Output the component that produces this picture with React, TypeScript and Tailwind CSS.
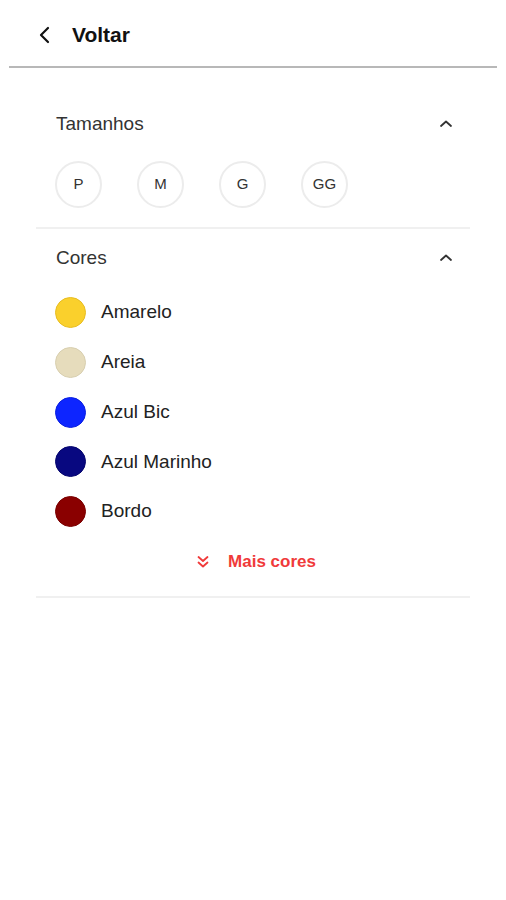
import React from "react";

const sizes = ["P", "M", "G", "GG"];
const colors = [
  { name: "Amarelo", bg: "bg-[#fad02c]", border: "border-[#e8bd22]" },
  { name: "Areia", bg: "bg-[#e6dcbc]", border: "border-[#d8cfb0]" },
  { name: "Azul Bic", bg: "bg-[#0d25ff]", border: "border-[#0a1fe0]" },
  { name: "Azul Marinho", bg: "bg-[#080880]", border: "border-[#06066e]" },
  { name: "Bordo", bg: "bg-[#8a0000]", border: "border-[#7a0000]" },
];

function ChevronUp() {
  return (
    <svg width="14" height="10" viewBox="0 0 14 10" fill="none">
      <path d="M2 7 L7 2.5 L12 7" stroke="#333" strokeWidth="1.8" strokeLinecap="round" strokeLinejoin="round" />
    </svg>
  );
}

export default function App() {
  return (
    <div className="w-[506px] h-[900px] bg-white" style={{ fontFamily: '"Liberation Sans", Arial, sans-serif' }}>
      <div className="mx-[9px] h-[68px] border-b-[2px] border-[#b8b8b8] flex items-center">
        <div className="pl-[29px] pt-[3px] flex items-center">
          <svg width="14" height="18" viewBox="0 0 14 18" fill="none">
            <path d="M10 2 L3 9 L10 16" stroke="#111" strokeWidth="2.2" strokeLinecap="round" strokeLinejoin="round" />
          </svg>
          <span className="ml-[20px] text-[21px] font-bold text-[#111] leading-none">Voltar</span>
        </div>
      </div>

      <div className="mx-[36px] mt-[41px]">
        <div className="border-b-[2px] border-[#f0f0f0] pb-[19px]">
          <div className="flex items-center justify-between pl-[20px] pr-[17px] h-[30px]">
            <span className="text-[19px] text-[#333]">Tamanhos</span>
            <ChevronUp />
          </div>
          <div className="flex gap-[35px] pl-[19px] mt-[22px]">
            {sizes.map((s) => (
              <div key={s} className="w-[47px] h-[47px] rounded-full border-[2px] border-[#ececec] flex items-center justify-center text-[15px] text-[#333]">
                {s}
              </div>
            ))}
          </div>
        </div>

        <div className="border-b-[2px] border-[#f0f0f0] pb-[21px]">
          <div className="flex items-center justify-between pl-[20px] pr-[17px] h-[30px] mt-[14px]">
            <span className="text-[19px] text-[#333]">Cores</span>
            <ChevronUp />
          </div>
          <div className="flex flex-col gap-[18.75px] pl-[19px] mt-[24px]">
            {colors.map((c) => (
              <div key={c.name} className="flex items-center">
                <div className={`w-[31px] h-[31px] rounded-full border ${c.bg} ${c.border}`} />
                <span className="ml-[15px] text-[19px] text-[#222]">{c.name}</span>
              </div>
            ))}
          </div>
          <div className="flex items-center justify-center mt-[22px] pl-[6px]">
            <svg width="14" height="14" viewBox="0 0 14 14" fill="none" className="mr-[18px]">
              <path d="M2.5 2 L7 6 L11.5 2" stroke="#f03a3a" strokeWidth="1.8" strokeLinecap="round" strokeLinejoin="round" />
              <path d="M2.5 7.5 L7 11.5 L11.5 7.5" stroke="#f03a3a" strokeWidth="1.8" strokeLinecap="round" strokeLinejoin="round" />
            </svg>
            <span className="text-[17px] font-bold text-[#f03a3a]">Mais cores</span>
          </div>
        </div>
      </div>
    </div>
  );
}
